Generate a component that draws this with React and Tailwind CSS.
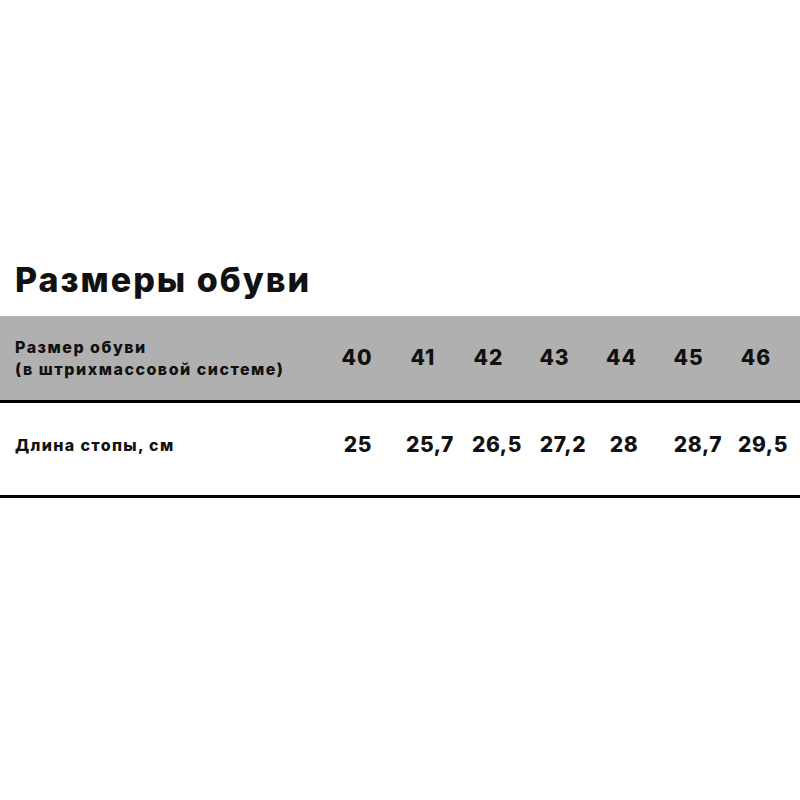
const sizes = ["40", "41", "42", "43", "44", "45", "46"];
const lengths = ["25", "25,7", "26,5", "27,2", "28", "28,7", "29,5"];

export default function App() {
  return (
    <div className="w-[800px] h-[800px] bg-white text-[#111] font-['Inter',sans-serif]">
      <div className="pt-[260px] pl-[15px]">
        <h1 className="text-[34px] leading-[40px] font-extrabold tracking-[2px]">Размеры обуви</h1>
      </div>

      <div className="mt-[16px] h-[84px] bg-[#b0b0b0] grid grid-cols-[324px_66px_66px_65px_67px_67px_67px_68px] items-center">
        <div className="pl-[15px] text-[16px] leading-[22px] font-extrabold tracking-[1.5px]">
          Размер обуви
          <br />
          (в штрихмассовой системе)
        </div>
        {sizes.map((s) => (
          <div key={s} className="flex justify-center text-[21px] font-extrabold tracking-[1px]">
            {s}
          </div>
        ))}
      </div>
      <div className="h-[3px] bg-black" />

      <div className="h-[92px] pb-[8px] grid grid-cols-[322px_72px_72px_62px_70px_52px_96px_34px] items-center">
        <div className="pl-[15px] text-[16px] font-extrabold tracking-[1.35px]">Длина стопы, см</div>
        {lengths.map((l) => (
          <div key={l} className="flex justify-center text-[21px] font-extrabold tracking-[0.6px] whitespace-nowrap">
            {l}
          </div>
        ))}
      </div>
      <div className="h-[3px] bg-black" />
    </div>
  );
}
